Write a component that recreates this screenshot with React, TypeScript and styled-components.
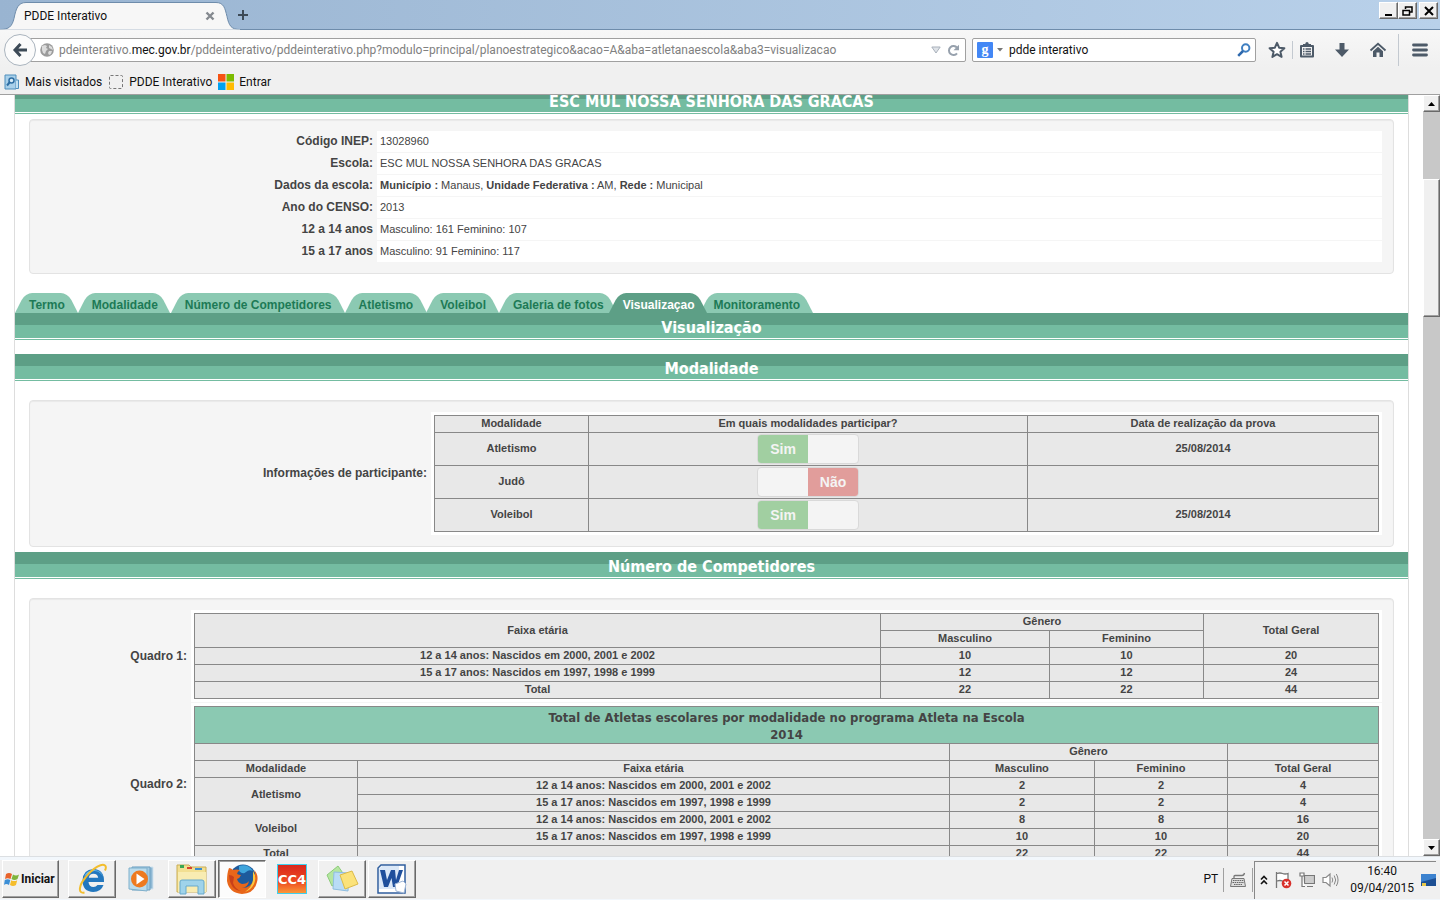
import React from 'react';
import styled, { createGlobalStyle, css } from 'styled-components';

const ui = `Roboto, "Noto Sans", sans-serif`;
const page = `"Liberation Sans", Arial, sans-serif`;
const heading = `"DejaVu Sans Condensed", "DejaVu Sans", sans-serif`;

const GlobalStyle = createGlobalStyle`
  * { box-sizing: border-box; }
  body { margin: 0; background: #fff; font-family: ${page}; color: #444; }
  button { padding: 0; border: 0; background: none; font: inherit; color: inherit; }
  svg { display: block; flex: none; }
`;

const Desktop = styled.div`
  display: flex;
  flex-direction: column;
  height: 100vh;
  overflow: hidden;
`;

/* ---------- browser chrome ---------- */

const TitleBar = styled.header`
  display: flex;
  flex: none;
  height: 30px;
  justify-content: space-between;
  background: linear-gradient(to right, #99b4d1, #b9d1ea);
  border-bottom: 1px solid #6e8cab;
  font: 12px/16px ${ui};
  color: #111;
`;

const TabStrip = styled.div`
  display: flex;
  align-items: center;
`;

const BrowserTab = styled.div`
  position: relative;
  display: flex;
  align-items: center;
  justify-content: space-between;
  width: 236px;
  height: 30px;
  padding: 2px 21px 0 24px;
`;

const TabShape = styled.svg`
  position: absolute;
  inset: 0;
`;

const TabLabel = styled.span`
  position: relative;
`;

const PlainButton = styled.button`
  position: relative;
  display: flex;
  align-items: center;
  justify-content: center;
  height: 16px;
`;

const WindowButtons = styled.div`
  display: flex;
  padding: 2px 2px 0 0;
`;

const bevel = css`
  background: #f0f0f0;
  border: 1px solid;
  border-color: #fff #696969 #696969 #fff;
  box-shadow: inset -1px -1px 0 #a0a0a0;
`;

const WindowButton = styled.button<{ $gap?: boolean }>`
  ${bevel}
  display: flex;
  align-items: center;
  justify-content: center;
  width: 19px;
  height: 17px;
  margin-left: ${(p) => (p.$gap ? 2 : 0)}px;
`;

const NavBar = styled.nav`
  display: flex;
  flex: none;
  align-items: center;
  height: 38px;
  padding: 2px 12px 0 4px;
  background: linear-gradient(#f7f7f7, #f0f0f0);
  font: 12px/16px ${ui};
  color: #111;
`;

const BackButton = styled.button`
  position: relative;
  z-index: 1;
  display: flex;
  flex: none;
  align-items: center;
  justify-content: center;
  width: 32px;
  height: 32px;
  border: 1px solid #aab4be;
  border-radius: 50%;
  background: #fbfbfb;
`;

const UrlBar = styled.div`
  display: flex;
  flex: 1;
  align-items: center;
  min-width: 0;
  height: 24px;
  margin: 0 6px 0 -6px;
  padding: 0 5px 0 9px;
  border: 1px solid #a0a0a0;
  border-radius: 0 2px 2px 0;
  background: #fff;
`;

const UrlText = styled.div`
  flex: 1;
  min-width: 0;
  margin-left: 5px;
  overflow: hidden;
  white-space: nowrap;
  color: #808080;
`;

const Domain = styled.span`
  color: #111;
`;

const UrlTools = styled.div`
  display: flex;
  align-items: center;
  gap: 6px;
`;

const SearchBar = styled.form`
  display: flex;
  flex: none;
  align-items: center;
  width: 284px;
  height: 24px;
  padding: 0 4px;
  border: 1px solid #a0a0a0;
  border-radius: 2px;
  background: #fff;
`;

const EngineBadge = styled.span`
  display: flex;
  align-items: center;
  justify-content: center;
  width: 16px;
  height: 16px;
  margin-right: 4px;
  border-radius: 1px;
  background: #4387f5;
  color: #fff;
  font: bold 14px/16px "Liberation Serif", serif;
`;

const SearchInput = styled.input`
  flex: 1;
  min-width: 0;
  margin-left: 6px;
  padding: 0;
  border: 0;
  outline: 0;
  background: none;
  font: 12px/16px ${ui};
  color: #111;
`;

const ToolGroup = styled.div`
  display: flex;
  align-items: center;
  gap: 18px;
  margin-left: 12px;
`;

const Divider = styled.span<{ $tall?: boolean }>`
  width: 1px;
  height: ${(p) => (p.$tall ? 32 : 18)}px;
  background: #c3c9d0;
`;

const StarGroup = styled.div`
  display: flex;
  align-items: center;
  gap: 6px;
`;

const MenuGroup = styled.div`
  display: flex;
  align-items: center;
  gap: 13px;
  margin-left: 11px;
`;

const BookmarkBar = styled.nav`
  display: flex;
  flex: none;
  align-items: center;
  gap: 6px;
  height: 27px;
  padding: 2px 4px 0;
  border-bottom: 1px solid #a0a0a0;
  background: #f0f0f0;
`;

const Bookmark = styled.a`
  display: flex;
  align-items: center;
  gap: 5px;
  color: #111;
  font: 12px/16px ${ui};
  text-decoration: none;
`;

/* ---------- viewport ---------- */

const Viewport = styled.div`
  display: flex;
  flex: 1;
  min-height: 0;
`;

const Scroller = styled.main`
  flex: 1;
  min-width: 0;
  overflow: hidden;
  background: #fff;
`;

const Sheet = styled.div`
  margin: -8px 14px 0;
  border: solid #ddd;
  border-width: 0 1px;
`;

const ScrollBar = styled.div`
  display: flex;
  flex: none;
  flex-direction: column;
  width: 17px;
  background: #c8c8c8;
`;

const ScrollButton = styled.button`
  ${bevel}
  display: flex;
  flex: none;
  align-items: center;
  justify-content: center;
  height: 17px;
`;

const ScrollTrack = styled.div`
  flex: 1;
`;

const ScrollThumb = styled.div`
  ${bevel}
  height: 138px;
  margin-top: 67px;
`;

const TitleBand = styled.h2<{ $top?: number }>`
  height: 27px;
  margin: ${(p) => p.$top ?? 0}px 0 0;
  border-bottom: 1px solid #74bca1;
  background: linear-gradient(#5d9f86 12px, #74bca1 12px 25px, #fff 25px);
  color: #fff;
  font: bold 16px/29px ${heading};
  text-align: center;
`;

const Panel = styled.section<{ $top: number }>`
  display: grid;
  gap: 1px;
  margin: ${(p) => p.$top}px 14px 0;
  padding: 11px;
  border: 1px solid #e3e3e3;
  border-radius: 4px;
  background: #f5f5f5;
  box-shadow: inset 0 1px 1px rgba(0, 0, 0, 0.05);
`;

const Row = styled.div<{ $label: string }>`
  display: grid;
  grid-template-columns: ${(p) => p.$label} minmax(0, 1fr);
`;

const RowLabel = styled.div`
  align-self: center;
  padding-right: 4px;
  font: bold 12px/21px ${page};
  text-align: right;
`;

const RowText = styled.div`
  padding-left: 3px;
  background: #fff;
  font: 11px/21px ${page};
`;

const RowTable = styled.div`
  padding: 3px;
  background: #fff;
`;

const TabList = styled.nav`
  display: flex;
  margin-top: 19px;
`;

const PageTab = styled.a<{ $active?: boolean }>`
  position: relative;
  z-index: ${(p) => (p.$active ? 1 : 0)};
  height: 20px;
  margin: 0 ${(p) => (p.$active ? -8 : 0)}px;
  padding: 2px 13px 0 14px;
  color: ${(p) => (p.$active ? '#fff' : '#1d7a56')};
  font: bold 12px/20px ${page};
  text-decoration: none;
  white-space: nowrap;

  &::before,
  &::after {
    content: '';
    position: absolute;
    z-index: -1;
    top: 0;
    bottom: 0;
    width: 51%;
    background: ${(p) => (p.$active ? '#5d9f86' : '#8bc9b2')};
  }
  &::before {
    left: 0;
    border-top-left-radius: 7px;
    transform: skewX(-27deg);
    transform-origin: bottom;
  }
  &::after {
    right: 0;
    border-top-right-radius: 7px;
    transform: skewX(27deg);
    transform-origin: bottom;
  }
`;

const TabText = styled.span`
  position: relative;
  z-index: 1;
`;

/* ---------- data tables ---------- */

const DataTable = styled.table`
  width: 100%;
  table-layout: fixed;
  border-collapse: collapse;
  background: #e8e8e8;
  font: bold 11px/14px ${page};
  text-align: center;

  th,
  td {
    height: 17px;
    padding: 0 0 2px;
    border: 1px solid #888;
  }
`;

const Col = styled.col<{ $w?: number }>`
  width: ${(p) => (p.$w ? `${p.$w}px` : 'auto')};
`;

const TallRow = styled.tr`
  && > td {
    height: 33px;
  }
  && > td:nth-child(2) {
    padding: 0;
  }
`;

const Banner = styled.th`
  && {
    height: 37px;
    padding: 2px 0 0;
    background: #8bc9b2;
    font: bold 13px/17px ${heading};
  }
`;

const Switch = styled.label`
  position: relative;
  display: grid;
  grid-template-columns: 1fr 1fr;
  width: 102px;
  height: 30px;
  margin: 0 auto;
  overflow: hidden;
  border: 1px solid #d9d9d9;
  border-radius: 4px;
  background: #f4f4f4;
`;

const SwitchInput = styled.input`
  position: absolute;
  inset: 0;
  width: 100%;
  height: 100%;
  margin: 0;
  opacity: 0;
`;

const SwitchFace = styled.span<{ $on: boolean }>`
  grid-column: ${(p) => (p.$on ? 1 : 2)};
  background: ${(p) => (p.$on ? '#a1cfa1' : '#e19d9b')};
  color: #f4f4f4;
  font: bold 14px/28px ${page};
`;

/* ---------- taskbar ---------- */

const TaskBar = styled.footer`
  display: flex;
  flex: none;
  justify-content: space-between;
  height: 44px;
  padding: 3px 4px 1px 2px;
  border-top: 1px solid #dcdfe2;
  background: linear-gradient(#f2f7fc 3px, #f0f0f0 3px 42px, #f2f7fc 42px);
  color: #111;
  font: 12px/17px ${ui};
`;

const TaskGroup = styled.div`
  display: flex;
  gap: 2px;
`;

const StartButton = styled.button`
  ${bevel}
  display: flex;
  align-items: center;
  gap: 1px;
  width: 57px;
  height: 38px;
  margin-right: 7px;
  padding-left: 1px;
  font: bold 12px/16px ${ui};
`;

const TaskButton = styled.button<{ $kind?: 'flat' | 'pressed' }>`
  display: flex;
  align-items: center;
  justify-content: center;
  width: 48px;
  height: 38px;
  ${(p) =>
    p.$kind === 'flat'
      ? ''
      : p.$kind === 'pressed'
        ? css`
            background: #fcfcfc;
            border: 1px solid;
            border-color: #696969 #fff #fff #696969;
            box-shadow: inset 1px 1px 0 #a0a0a0;
          `
        : bevel}
`;

const Tray = styled.div`
  display: flex;
  align-items: center;
`;

const Language = styled.div`
  display: flex;
  align-items: center;
  gap: 5px;
  margin-right: 1px;
`;

const TrayDivider = styled.span`
  width: 1px;
  height: 24px;
  background: #a0a0a0;
`;

const TrayBox = styled.div`
  display: flex;
  align-items: center;
  gap: 7px;
  height: 38px;
  padding-left: 5px;
  border-top: 1px solid #888;
  border-left: 1px solid #888;
`;

const Clock = styled.time`
  margin-left: 4px;
  text-align: center;
`;

/* ---------- data ---------- */

const school: [string, React.ReactNode][] = [
  ['Código INEP:', '13028960'],
  ['Escola:', 'ESC MUL NOSSA SENHORA DAS GRACAS'],
  ['Dados da escola:', <><b>Município :</b> Manaus, <b>Unidade Federativa :</b> AM, <b>Rede :</b> Municipal</>],
  ['Ano do CENSO:', '2013'],
  ['12 a 14 anos', 'Masculino: 161 Feminino: 107'],
  ['15 a 17 anos', 'Masculino: 91 Feminino: 117'],
];

const tabs = ['Termo', 'Modalidade', 'Número de Competidores', 'Atletismo', 'Voleibol', 'Galeria de fotos', 'Visualizaçao', 'Monitoramento'];

const sports = [
  { name: 'Atletismo', on: true, date: '25/08/2014' },
  { name: 'Judô', on: false, date: '' },
  { name: 'Voleibol', on: true, date: '25/08/2014' },
];

const younger = '12 a 14 anos: Nascidos em 2000, 2001 e 2002';
const older = '15 a 17 anos: Nascidos em 1997, 1998 e 1999';

const totals = [
  [younger, '10', '10', '20'],
  [older, '12', '12', '24'],
  ['Total', '22', '22', '44'],
];

const athletes = [
  { name: 'Atletismo', rows: [[younger, '2', '2', '4'], [older, '2', '2', '4']] },
  { name: 'Voleibol', rows: [[younger, '8', '8', '16'], [older, '10', '10', '20']] },
];

/* ---------- icons ---------- */

const slate = '#4d5a68';

const StarIcon = () => (
  <svg width="18" height="18" viewBox="0 0 18 18">
    <path d="M9 1.8l2.1 4.9 5.3.5-4 3.5 1.2 5.2L9 13.2l-4.6 2.7 1.2-5.2-4-3.5 5.3-.5z" fill="#fff" stroke={slate} strokeWidth="2" strokeLinejoin="round" />
  </svg>
);
const ListIcon = () => (
  <svg width="16" height="18" viewBox="0 0 16 18">
    <path d="M2 5h12v10.500H2z" fill="none" stroke={slate} strokeWidth="2" strokeLinejoin="round" />
    <path d="M4 5V3h2.200q.3-2 1.800-2t1.800 2H12v2z" fill={slate} />
    <path d="M4 8h1.500M6.500 8H12M4 10.500h1.500M6.500 10.500H12M4 13h1.500M6.500 13H12" stroke={slate} strokeWidth="1.300" />
  </svg>
);
const DownIcon = () => (
  <svg width="18" height="18" viewBox="0 0 18 18">
    <path d="M6.500 2h5v6.500H16L9 16 2 8.500h4.500z" fill={slate} />
  </svg>
);
const HomeIcon = () => (
  <svg width="18" height="18" viewBox="0 0 18 18">
    <path d="M1.500 9.500L9 2.800l7.500 6.700" fill="none" stroke={slate} strokeWidth="1.800" />
    <path d="M9 5.800l5 4.500V16h-3.500v-4.500h-3V16H4v-5.700z" fill={slate} />
  </svg>
);
const MenuIcon = () => (
  <svg width="16" height="14" viewBox="0 0 16 14">
    <path d="M1.500 2h13M1.500 7h13M1.500 12h13" stroke={slate} strokeWidth="2.800" strokeLinecap="round" />
  </svg>
);
const GlobeIcon = () => (
  <svg width="14" height="14" viewBox="0 0 14 14">
    <circle cx="7" cy="7" r="6.800" fill="#9b9b9b" />
    <path d="M2 3l3-1 2 1-1 2 2 1-2 2-1 3-2-1-1-3zM9 2l3 2 1 3-2-1-2-1zM9 8l3 0-1 3-2 1-1-2z" fill="#dcdcdc" />
  </svg>
);
const IEIcon = () => (
  <svg width="32" height="32" viewBox="0 0 32 32">
    <path d="M28 19H12.500q.5 5 5 5 2.500 0 4-2h6Q25 29 17.300 29 6.500 28.500 6.500 17.500 7 6.500 17.300 6 28.500 6.500 28 19zM12.800 14.800h9.400q-.6-4-4.700-4t-4.700 4z" fill="#2377be" />
    <path d="M8 14q2-6.500 9.500-7 7.500.2 9.500 6.500-1.500-3-5-5-6-1.500-9 2-3 1-5 3.500z" fill="#6cbcf0" />
    <path d="M8.500 29.500c-7 1.500-5.500-7.500 1-15C17 5 27-1 29.500 3c.7 1.200.2 3-.6 4.500" fill="none" stroke="#f2bd2d" strokeWidth="2" />
  </svg>
);
const PlayerIcon = () => (
  <svg width="32" height="32" viewBox="0 0 32 32">
    <path d="M9 4h18v22H9z" fill="#8fb8d4" stroke="#d2e4ef" />
    <path d="M6 4h18v23H6z" fill="#a4cbe2" stroke="#6d9fc0" />
    <path d="M3 5h18v23L3 26z" fill="#bcdcec" stroke="#7fb0cc" />
    <circle cx="13.500" cy="16" r="8.500" fill="#ee7a1f" />
    <path d="M10.500 10.500l8 5.500-8 5.500z" fill="#fff" />
  </svg>
);
const FolderIcon = () => (
  <svg width="34" height="32" viewBox="0 0 34 32">
    <path d="M2 6V2h12l2 2h15v25H2z" fill="#f2df91" stroke="#c9ad55" />
    <path d="M5 2h4v3H5z" fill="#3aa655" />
    <path d="M12 4h5v2h-5z" fill="#d9432f" />
    <path d="M20 5h7v2h-7z" fill="#3b8ed0" />
    <path d="M3 9h28v20H3z" fill="#f8ecb2" />
    <path d="M5 31V19q0-2 2-2h20q2 0 2 2v12h-6v-8H11v8z" fill="#9fd3ea" stroke="#67a9cc" />
  </svg>
);
const FirefoxIcon = () => (
  <svg width="32" height="32" viewBox="0 0 32 32">
    <circle cx="17" cy="14.500" r="13" fill="#1d5a9c" />
    <path d="M13 3q9-3 14 5-4-2-7 1t-7-1z" fill="#3fa5dc" />
    <path d="M3 5q2 0 4 2 3-1 7 0-3 2-3 4 2 1 4 1-1 3-4 4 1 4 5 5 5 0 7-3-1 6-7 7 9 0 12-9 2-5 0-9 5 5 3 12Q28 31 16 31 3 30 1 18 1 10 3 5z" fill="#e8661a" />
    <path d="M27 8q4 6 1 13-3 6-9 8 7-5 8-12z" fill="#fbc840" />
    <path d="M3 12q3 0 5 2l-1 6q2 6 8 8Q4 27 3 12z" fill="#c9401a" />
  </svg>
);
const NotesIcon = () => (
  <svg width="34" height="30" viewBox="0 0 34 30">
    <path d="M2 11l11-9 9 13L7 22z" fill="#b5e6a0" stroke="#8ccb7a" />
    <path d="M9 8l15 1-1 18-15-2z" fill="#b9dcf6" stroke="#8fbde0" />
    <path d="M15 11l12-4 6 13-13 5z" fill="#fbe27a" stroke="#dcbb48" />
  </svg>
);
const WordIcon = () => (
  <svg width="32" height="32" viewBox="0 0 32 32">
    <path d="M5 2h24v28H2V5z" fill="#fff" stroke="#2f5e9e" strokeWidth="1.500" />
    <path d="M3 6l3-3h17v23H3z" fill="#dbe8f8" />
    <path d="M4 7h5l2 10 4-10h4l1 10 3-10h4l-6 17h-4l-1.500-9L12 24H8z" fill="#1f4f9c" />
    <path d="M19 21l8-3 3 3-2 9-8-2z" fill="#fff" stroke="#9fb6d6" />
  </svg>
);
const WindowsLogo = () => (
  <svg width="16" height="15" viewBox="0 0 16 15">
    <path d="M2 2q3-2 6 0L6.500 7q-3-1.500-5.500 0z" fill="#e8632b" />
    <path d="M9 2.500q3 2 6 0L13.500 7q-3 1.800-6 0z" fill="#7fb53c" />
    <path d="M.8 8q3-1.500 5.500 0L5 13q-3-1.800-5 0z" fill="#3d8fd6" />
    <path d="M7.200 8.200q3 1.800 6 0L12 13q-3 1.800-6 0z" fill="#f5bd2c" />
  </svg>
);

/* ---------- sections ---------- */

const Chrome = () => (
  <>
    <TitleBar>
      <TabStrip>
        <BrowserTab>
          <TabShape width="240" height="30" viewBox="0 0 240 30">
            <path d="M0 29.500c9 0 12-3 14-11 2-10 4-16 12-16h190c8 0 9 6 11 14 2 9 4 13 13 13V30H0z" fill="#f7f7f7" stroke="#6e8cab" />
            <path d="M0 30h240" stroke="#f7f7f7" />
          </TabShape>
          <TabLabel>PDDE Interativo</TabLabel>
          <PlainButton aria-label="Fechar aba">
            <svg width="10" height="10" viewBox="0 0 10 10"><path d="M1.500 1.500l7 7M8.500 1.500l-7 7" stroke="#84898f" strokeWidth="2.400" /></svg>
          </PlainButton>
        </BrowserTab>
        <PlainButton aria-label="Nova aba">
          <svg width="14" height="12" viewBox="0 0 14 12"><path d="M7 1v10M2 6h10" stroke="#3d4a57" strokeWidth="2" /></svg>
        </PlainButton>
      </TabStrip>
      <WindowButtons>
        <WindowButton aria-label="Minimizar"><svg width="10" height="10" viewBox="0 0 10 10"><path d="M1 8h7v2H1z" /></svg></WindowButton>
        <WindowButton aria-label="Restaurar">
          <svg width="11" height="10" viewBox="0 0 11 10"><path d="M3.500 3V1H10v5H8" fill="none" stroke="#000" strokeWidth="1.500" /><path d="M1 4.500h6.500v4.500H1z" fill="none" stroke="#000" strokeWidth="1.500" /></svg>
        </WindowButton>
        <WindowButton $gap aria-label="Fechar"><svg width="10" height="10" viewBox="0 0 10 10"><path d="M1 1l8 8M9 1L1 9" stroke="#000" strokeWidth="2" /></svg></WindowButton>
      </WindowButtons>
    </TitleBar>
    <NavBar>
      <BackButton aria-label="Voltar">
        <svg width="16" height="16" viewBox="0 0 16 16"><path d="M8.500 2L3 8l5.500 6M3 8h12" fill="none" stroke="#3d4a57" strokeWidth="3" /></svg>
      </BackButton>
      <UrlBar>
        <GlobeIcon />
        <UrlText role="textbox" aria-label="Endereço" tabIndex={0}>
          pdeinterativo.<Domain>mec.gov.br</Domain>/pddeinterativo/pddeinterativo.php?modulo=principal/planoestrategico&amp;acao=A&amp;aba=atletanaescola&amp;aba3=visualizacao
        </UrlText>
        <UrlTools>
          <svg width="10" height="8" viewBox="0 0 10 8"><path d="M.8 1h8.400L5 7z" fill="#dfe3e8" stroke="#a9b1bb" /></svg>
          <PlainButton aria-label="Recarregar">
            <svg width="13" height="13" viewBox="0 0 13 13"><path d="M10 9.300a4.500 4.500 0 1 1 0-5.600" fill="none" stroke="#97a1ad" strokeWidth="2" /><path d="M12 .8v5.500H6.500z" fill="#97a1ad" /></svg>
          </PlainButton>
        </UrlTools>
      </UrlBar>
      <SearchBar role="search" onSubmit={(e) => e.preventDefault()}>
        <EngineBadge>g</EngineBadge>
        <svg width="6" height="4" viewBox="0 0 6 4"><path d="M0 0h6L3 3.500z" fill="#777" /></svg>
        <SearchInput aria-label="Pesquisar" defaultValue="pdde interativo" />
        <PlainButton aria-label="Pesquisar">
          <svg width="14" height="14" viewBox="0 0 14 14"><circle cx="8.700" cy="5" r="3.700" fill="none" stroke="#3f7fc1" strokeWidth="2" /><path d="M6 8l-4.800 4.800" stroke="#2d68ad" strokeWidth="2.500" /></svg>
        </PlainButton>
      </SearchBar>
      <ToolGroup>
        <StarGroup>
          <PlainButton aria-label="Favoritar"><StarIcon /></PlainButton>
          <Divider />
          <PlainButton aria-label="Favoritos"><ListIcon /></PlainButton>
        </StarGroup>
        <PlainButton aria-label="Downloads"><DownIcon /></PlainButton>
        <PlainButton aria-label="Página inicial"><HomeIcon /></PlainButton>
      </ToolGroup>
      <MenuGroup>
        <Divider $tall />
        <PlainButton aria-label="Menu"><MenuIcon /></PlainButton>
      </MenuGroup>
    </NavBar>
    <BookmarkBar>
      <Bookmark href="#">
        <svg width="16" height="16" viewBox="0 0 16 16"><path d="M1 1h11v14H1z" fill="#a9d0ea" stroke="#4f8fbd" /><path d="M12 6h2.500v8.500H12" fill="#c3e0f2" stroke="#4f8fbd" /><circle cx="7.500" cy="6.500" r="2.500" fill="#d8ecf8" stroke="#2f6ea3" strokeWidth="1.500" /><path d="M5.500 8.500L3 11.500" stroke="#2f6ea3" strokeWidth="2" /></svg>
        Mais visitados
      </Bookmark>
      <Bookmark href="#">
        <svg width="16" height="16" viewBox="0 0 16 16"><rect x="1.500" y="1.500" width="13" height="13" rx="1" fill="none" stroke="#777" strokeDasharray="3 2" /></svg>
        PDDE Interativo
      </Bookmark>
      <Bookmark href="#">
        <svg width="16" height="16" viewBox="0 0 16 16"><path d="M0 0h7.500v7.500H0z" fill="#f65314" /><path d="M8.500 0H16v7.500H8.500z" fill="#7cbb00" /><path d="M0 8.500h7.500V16H0z" fill="#00a1f1" /><path d="M8.500 8.500H16V16H8.500z" fill="#ffbb00" /></svg>
        Entrar
      </Bookmark>
    </BookmarkBar>
  </>
);

const SportsTable = () => (
  <DataTable>
    <colgroup><Col $w={154} /><Col /><Col $w={351} /></colgroup>
    <thead>
      <tr><th>Modalidade</th><th>Em quais modalidades participar?</th><th>Data de realização da prova</th></tr>
    </thead>
    <tbody>
      {sports.map((s) => (
        <TallRow key={s.name}>
          <td>{s.name}</td>
          <td>
            <Switch>
              <SwitchInput type="checkbox" defaultChecked={s.on} aria-label={s.name} />
              <SwitchFace $on={s.on}>{s.on ? 'Sim' : 'Não'}</SwitchFace>
            </Switch>
          </td>
          <td>{s.date}</td>
        </TallRow>
      ))}
    </tbody>
  </DataTable>
);

const TotalsTable = () => (
  <DataTable>
    <colgroup><Col /><Col $w={169} /><Col $w={154} /><Col $w={175} /></colgroup>
    <thead>
      <tr><th rowSpan={2}>Faixa etária</th><th colSpan={2}>Gênero</th><th rowSpan={2}>Total Geral</th></tr>
      <tr><th>Masculino</th><th>Feminino</th></tr>
    </thead>
    <tbody>
      {totals.map((row) => (
        <tr key={row[0]}>{row.map((c, i) => <td key={i}>{c}</td>)}</tr>
      ))}
    </tbody>
  </DataTable>
);

const AthletesTable = () => (
  <DataTable>
    <colgroup><Col $w={163} /><Col /><Col $w={145} /><Col $w={133} /><Col $w={151} /></colgroup>
    <thead>
      <tr><Banner colSpan={5}>Total de Atletas escolares por modalidade no programa Atleta na Escola<br />2014</Banner></tr>
      <tr><th colSpan={2} /><th colSpan={2}>Gênero</th><th /></tr>
      <tr><th>Modalidade</th><th>Faixa etária</th><th>Masculino</th><th>Feminino</th><th>Total Geral</th></tr>
    </thead>
    <tbody>
      {athletes.map((sport) =>
        sport.rows.map((row, n) => (
          <tr key={sport.name + n}>
            {n === 0 && <td rowSpan={2}>{sport.name}</td>}
            {row.map((c, i) => <td key={i}>{c}</td>)}
          </tr>
        )),
      )}
      <tr><td>Total</td><td /><td>22</td><td>22</td><td>44</td></tr>
    </tbody>
  </DataTable>
);

const Tasks = () => (
  <TaskBar>
    <TaskGroup>
      <StartButton><WindowsLogo />Iniciar</StartButton>
      <TaskButton aria-label="Internet Explorer"><IEIcon /></TaskButton>
      <TaskButton $kind="flat" aria-label="Media Player"><PlayerIcon /></TaskButton>
      <TaskButton aria-label="Explorador de arquivos"><FolderIcon /></TaskButton>
      <TaskButton $kind="pressed" aria-label="Firefox"><FirefoxIcon /></TaskButton>
      <TaskButton $kind="flat" aria-label="CC4">
        <svg width="30" height="30" viewBox="0 0 30 30">
          <defs><linearGradient id="cc" x1="0" y1="0" x2="0" y2="1"><stop offset="0" stopColor="#d8261c" /><stop offset=".6" stopColor="#ee4b20" /><stop offset="1" stopColor="#fb9a3c" /></linearGradient></defs>
          <rect x=".5" y=".5" width="29" height="29" fill="url(#cc)" stroke="#3fd0ee" />
          <text x="15" y="20" textAnchor="middle" fill="#fff" fontFamily="DejaVu Sans" fontWeight="bold" fontSize="13">CC4</text>
        </svg>
      </TaskButton>
      <TaskButton aria-label="Notas"><NotesIcon /></TaskButton>
      <TaskButton aria-label="Word"><WordIcon /></TaskButton>
    </TaskGroup>
    <Tray>
      <Language>
        PT
        <TrayDivider />
        <svg width="18" height="16" viewBox="0 0 18 16"><path d="M3 6.500h12l1.500 8h-15z" fill="#ddd" stroke="#777" strokeLinejoin="round" /><path d="M4 8.500h10.500M3.500 10.500h11.500M5 12.500h8" stroke="#666" strokeDasharray="1.500 .7" /><path d="M5 6V4.500q0-1 1-1h7q2 0 2.500-2.500" fill="none" stroke="#777" strokeWidth="1.300" /></svg>
        <TrayDivider />
      </Language>
      <TrayBox>
        <svg width="8" height="10" viewBox="0 0 8 10"><path d="M1 4.500l3-3 3 3M1 9l3-3 3 3" fill="none" stroke="#111" strokeWidth="1.600" /></svg>
        <svg width="17" height="18" viewBox="0 0 17 18"><path d="M1.500 1v16M2 2.500q3-1 5.500 0t5.500 0V10q-3 1-5.500 0t-5.500 0" fill="#fff" stroke="#777" strokeWidth="1.300" /><circle cx="11.500" cy="12.500" r="4.800" fill="#d8302b" /><path d="M9.500 10.500l4 4M13.500 10.500l-4 4" stroke="#fff" strokeWidth="1.500" /></svg>
        <svg width="16" height="16" viewBox="0 0 16 16"><path d="M5.500 3.500h10v8h-10zM8 14.500h6" fill="#ccc" stroke="#777" strokeWidth="1.200" /><path d="M1 1v3h4V1zM3 4v10.500h3" fill="#fff" stroke="#777" strokeWidth="1.200" /></svg>
        <svg width="17" height="16" viewBox="0 0 17 16"><path d="M1 5.500h3L8 2v12l-4-3.500H1z" fill="#fff" stroke="#888" strokeWidth="1.200" /><path d="M10 5.500q1.500 2.500 0 5M12.200 3.500q3 4.500 0 9M14.300 2q3.500 6 0 12" fill="none" stroke="#888" /></svg>
        <Clock>16:40<br />09/04/2015</Clock>
        <svg width="15" height="13" viewBox="0 0 15 13"><rect width="15" height="12" fill="#1d4f93" /><path d="M0 0h15v4L0 8z" fill="#3c82cf" /><path d="M1 9h4v3H1z" fill="#e8c84a" /></svg>
      </TrayBox>
    </Tray>
  </TaskBar>
);

export default function App() {
  return (
    <Desktop>
      <GlobalStyle />
      <Chrome />
      <Viewport>
        <Scroller>
          <Sheet>
            <TitleBand>ESC MUL NOSSA SENHORA DAS GRACAS</TitleBand>
            <Panel $top={5}>
              {school.map(([label, value]) => (
                <Row key={label} $label="336px">
                  <RowLabel>{label}</RowLabel>
                  <RowText>{value}</RowText>
                </Row>
              ))}
            </Panel>
            <TabList>
              {tabs.map((t) => (
                <PageTab key={t} href="#" $active={t === 'Visualizaçao'}><TabText>{t}</TabText></PageTab>
              ))}
            </TabList>
            <TitleBand>Visualização</TitleBand>
            <TitleBand $top={14}>Modalidade</TitleBand>
            <Panel $top={19}>
              <Row $label="390px"><RowLabel>Informações de participante:</RowLabel><RowTable><SportsTable /></RowTable></Row>
            </Panel>
            <TitleBand $top={5}>Número de Competidores</TitleBand>
            <Panel $top={19}>
              <Row $label="150px"><RowLabel>Quadro 1:</RowLabel><RowTable><TotalsTable /></RowTable></Row>
              <Row $label="150px"><RowLabel>Quadro 2:</RowLabel><RowTable><AthletesTable /></RowTable></Row>
            </Panel>
          </Sheet>
        </Scroller>
        <ScrollBar>
          <ScrollButton aria-label="Rolar para cima"><svg width="7" height="4" viewBox="0 0 7 4"><path d="M0 4h7L3.500 0z" /></svg></ScrollButton>
          <ScrollTrack><ScrollThumb /></ScrollTrack>
          <ScrollButton aria-label="Rolar para baixo"><svg width="7" height="4" viewBox="0 0 7 4"><path d="M0 0h7L3.500 4z" /></svg></ScrollButton>
        </ScrollBar>
      </Viewport>
      <Tasks />
    </Desktop>
  );
}
